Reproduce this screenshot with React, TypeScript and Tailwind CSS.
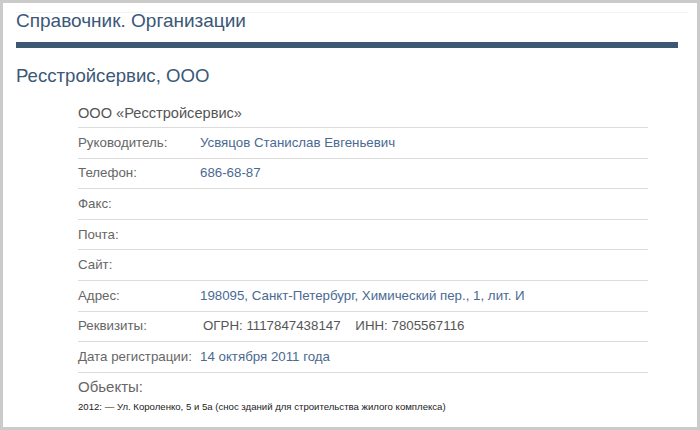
const rows: { label: string; value?: string; tone?: "link" | "plain"; indent?: boolean }[] = [
  { label: "Руководитель:", value: "Усвяцов Станислав Евгеньевич", tone: "link" },
  { label: "Телефон:", value: "686-68-87", tone: "link" },
  { label: "Факс:" },
  { label: "Почта:" },
  { label: "Сайт:" },
  { label: "Адрес:", value: "198095, Санкт-Петербург, Химический пер., 1, лит. И", tone: "link" },
  { label: "Реквизиты:", value: "ОГРН: 1117847438147\u00a0\u00a0\u00a0\u00a0ИНН: 7805567116", tone: "plain", indent: true },
  { label: "Дата регистрации:", value: "14 октября 2011 года", tone: "link" },
];

export default function App() {
  return (
    <div
      className="h-[430px] w-[700px] overflow-hidden border-[3px] border-[#cbcbcb] bg-white"
      style={{ fontFamily: '"Liberation Sans", Arial, sans-serif' }}
    >
      <div className="ml-[13px] mr-[9px] mt-[9px] border-t border-[#f3f3f3]" />
      <div className="pl-[13px] pr-[19px]">
        <h1 className="h-[24px] text-[19px] leading-[16px] text-[#3b5878]">Справочник. Организации</h1>
        <div className="mt-[5px] h-[6px] bg-[#3d5873]" />
        <h2 className="mt-[18px] text-[18.6px] leading-[20px] text-[#3b5878]">Ресстройсервис, ООО</h2>
      </div>

      <div className="ml-[75px] mr-[49px] mt-[13px] text-[13.3px] leading-[16px]">
        <div className="flex h-[29px] items-center border-b border-[#dcdcdc] text-[14.6px] text-[#555]">
          ООО «Ресстройсервис»
        </div>
        {rows.map((r) => (
          <div key={r.label} className="flex h-[30.6px] items-center border-b border-[#dcdcdc]">
            <span className="w-[122px] shrink-0 text-[#666]">{r.label}</span>
            {r.value && (
              <span className={r.tone === "link" ? "text-[#4a6a93]" : "pl-[3px] text-[#555]"}>{r.value}</span>
            )}
          </div>
        ))}
        <div className="mt-[5px] text-[15px] leading-[18px] text-[#666]">Обьекты:</div>
        <div className="mt-[5px] text-[9.6px] leading-[12px] text-[#222]">
          2012: — Ул. Короленко, 5 и 5а (снос зданий для строительства жилого комплекса)
        </div>
      </div>
    </div>
  );
}
